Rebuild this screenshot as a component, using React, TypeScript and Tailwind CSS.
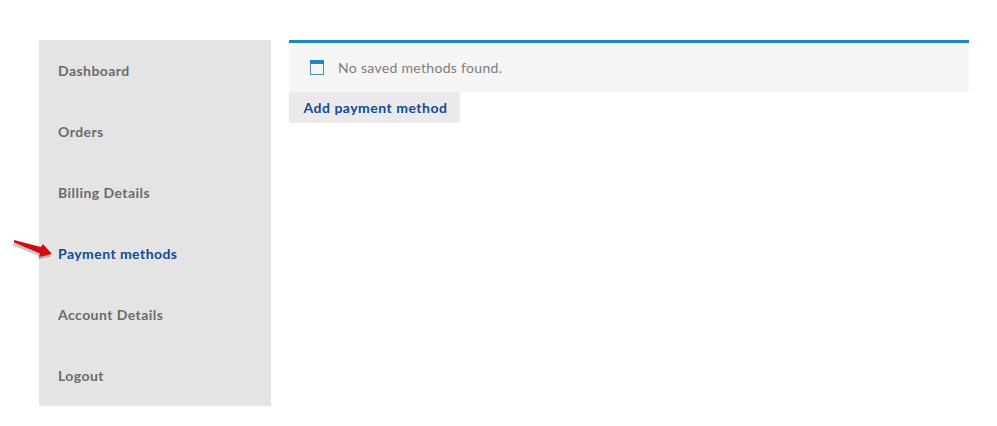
import React from "react";

const links = [
  "Dashboard",
  "Orders",
  "Billing Details",
  "Payment methods",
  "Account Details",
  "Logout",
];

function Sidebar() {
  return (
    <nav className="w-[232px] shrink-0 self-start bg-[#e4e4e4]">
      {links.map((label) => {
        const active = label === "Payment methods";
        return (
          <div key={label} className="relative flex h-[61px] items-center pl-[19px]">
            {active && (
              <svg
                className="absolute left-[-27px] top-[17px]"
                width="42"
                height="24"
                viewBox="0 0 42 24"
              >
                <path d="M2 1 L29 8 L31 5 L40 14.5 L27 17.5 L28 14 L2 3.5 Z" fill="#000" opacity="0.22" transform="translate(-1 2)" />
                <path d="M2 0 L29 7 L31 4 L40 14 L27 17 L28 13.5 L2 2.5 Z" fill="#d20a11" />
              </svg>
            )}
            <span
              className={`text-[14px] font-bold tracking-[0.45px] ${
                active ? "text-[#124a94]" : "text-[#6b6b6b]"
              }`}
            >
              {label}
            </span>
          </div>
        );
      })}
    </nav>
  );
}

export default function App() {
  return (
    <div
      className="flex h-[426px] gap-[18px] bg-white pl-[39px] pr-[28px] pt-[40px]"
      style={{ fontFamily: "Lato, 'Noto Sans', sans-serif" }}
    >
      <Sidebar />
      <main className="flex-1">
        <div className="flex h-[52px] items-center border-t-[3px] border-[#1e85c4] bg-[#f6f5f6] pl-[21px]">
          <svg width="14" height="15" viewBox="0 0 14 15" className="mr-[14px]">
            <rect x="0.5" y="0.5" width="13" height="14" fill="none" stroke="#5b87b8" />
            <rect x="0" y="0" width="14" height="4" fill="#1e85c4" />
          </svg>
          <span className="text-[14px] tracking-[0.31px] text-[#7d7d7d]">No saved methods found.</span>
        </div>
        <button
          type="button"
          className="h-[31px] w-[171px] rounded-[3px] bg-[#ebe9eb] pl-[2px] text-[14px] font-bold tracking-[0.5px] text-[#124a94]"
        >
          Add payment method
        </button>
      </main>
    </div>
  );
}
